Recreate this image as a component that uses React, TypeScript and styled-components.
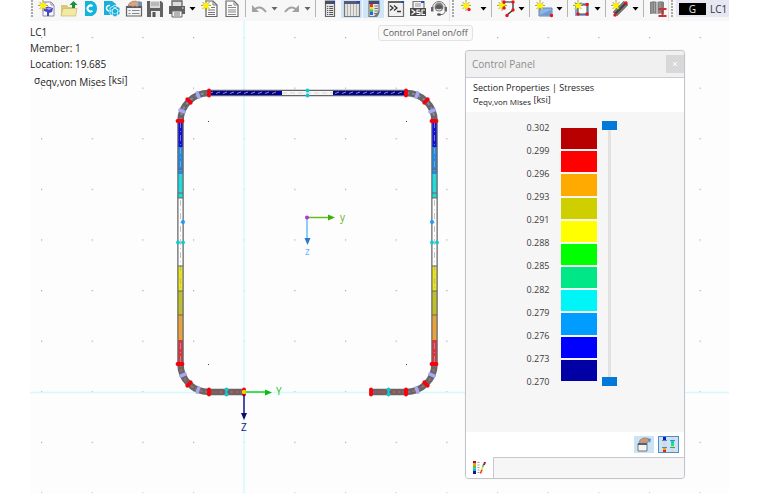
import React from "react";
import styled, { createGlobalStyle, css } from "styled-components";

const GlobalStyle = createGlobalStyle`
  *, *::before, *::after { box-sizing: border-box; }
  body {
    margin: 0;
    background: #fff;
    font-family: "Open Sans", "Noto Sans", sans-serif;
    font-size: 10px;
    color: #1c1c1c;
    overflow: hidden;
  }
  button, input { font: inherit; margin: 0; padding: 0; }
`;

const Shell = styled.div`
  display: flex;
  flex-direction: column;
  height: 100vh;
  margin: 0 31px 0 30px;
`;

/* ---------- toolbar ---------- */

const Toolbar = styled.div`
  display: flex;
  flex: none;
  height: 21px;
  background: #f7f7f7;
  overflow: hidden;
`;

const Handle = styled.span<{ $w: number }>`
  flex: none;
  width: ${(p) => p.$w}px;
  height: 18px;
  background: radial-gradient(circle at 1px 1px, #a9a9a9 1px, transparent 1px) 1px 0 / 3px 3px repeat-y;
`;

const ToolButton = styled.button<{ $w?: number; $on?: boolean }>`
  flex: none;
  display: flex;
  justify-content: center;
  width: ${(p) => p.$w ?? 22}px;
  height: 18px;
  border: 0;
  background: none;
  ${(p) => p.$on && css`
    background: #cfe6f9;
    border: solid #f7f7f7;
    border-width: 0 1px 0 0;
  `}
  svg { flex: none; display: block; width: 18px; height: 18px; }
`;

const CaretButton = styled.button<{ $soft?: boolean }>`
  flex: none;
  display: flex;
  justify-content: center;
  width: 9px;
  height: 18px;
  border: 0;
  background: none;
  color: ${(p) => (p.$soft ? "#666" : "#000")};
  svg { flex: none; display: block; width: 9px; height: 18px; }
`;

const Separator = styled.span<{ $w?: number }>`
  flex: none;
  width: ${(p) => p.$w ?? 7}px;
  height: 17px;
  background: linear-gradient(#b4b4b4, #b4b4b4) center / 1px 100% no-repeat;
`;

const Gap = styled.span<{ $w: number }>`
  flex: none;
  width: ${(p) => p.$w}px;
`;

const BarEnd = styled.span`
  flex: none;
  width: 2px;
  border-left: 1px solid #e2e2e2;
`;

const LoadCase = styled.button`
  flex: 1;
  display: flex;
  align-items: center;
  gap: 4px;
  min-width: 0;
  height: 17px;
  padding: 0 0 0 3px;
  border: 0;
  background: #e7e7f3;
  color: #333;
  line-height: 16px;
`;

const LoadTag = styled.span`
  flex: none;
  width: 27px;
  height: 12px;
  background: #000;
  color: #e8e8e8;
  line-height: 12px;
  text-align: center;
`;

type IconName =
  | "model" | "open" | "cloud" | "cubes" | "calendar" | "save" | "print" | "report" | "page"
  | "undo" | "redo" | "navigator" | "tables" | "palette" | "console" | "script" | "support"
  | "node" | "line" | "surface" | "opening" | "member" | "library";

const Star = () => (
  <g>
    <path d="M5 0v11M0 5.500h10M1.500 2l7 7M8.500 2l-7 7" stroke="#8f8a3c" strokeWidth=".8" />
    <path d="M5 1l1.200 3 3.300.3-2.500 2 .9 3.200L5 7.800 2.100 9.500 3 6.300.5 4.300 3.800 4z" fill="#fff200" />
  </g>
);

const Dot = ({ x, y }: { x: number; y: number }) => <circle cx={x} cy={y} r="1.700" fill="#e8141c" />;

const drawings: Record<IconName, React.ReactNode> = {
  model: (
    <>
      <path d="M5 2h8l3 3v11H5z" fill="#fafafc" stroke="#8a8d9c" />
      <path d="M13 2v3h3" fill="none" stroke="#8a8d9c" />
      <path d="M6 8l4-1.500L15 8l-1 4-3 1v3H9v-4l-3-1z" fill="#4a45c4" />
      <path d="M8 8.500l3-1 3 1-3 1.500z" fill="#a7a2ee" />
      <Star />
    </>
  ),
  open: (
    <>
      <path d="M1 16V5h6l1.500 2H15v9z" fill="#d8cb76" />
      <path d="M1 16L3 8.500h14L15.500 16z" fill="#f3e9a5" stroke="#c6b962" strokeWidth=".7" />
      <path d="M12 8V5H9.500L13.500 1l4 4H15v3z" fill="#17903c" />
    </>
  ),
  cloud: (
    <>
      <path d="M3 1h7q5 2 5 7.500T10 16H3z" fill="#12b4dc" />
      <path d="M10.500 6.200A3 3 0 1 0 10.500 10.800" fill="none" stroke="#fff" strokeWidth="2" />
    </>
  ),
  cubes: (
    <>
      <path d="M1 1h8l4 3v3l-4 3v5H1z" fill="#19afd9" />
      <path d="M7 5.500A2.800 2.800 0 1 0 6 11" fill="none" stroke="#fff" strokeWidth="1.500" />
      <path d="M12 5l5 3v6l-5 3-5-3V8z" fill="#16afdb" stroke="#eefaff" strokeWidth=".8" />
      <path d="M9.500 6.500l5 3v6M14.500 6.500l-5 3v6M7 11l5 3 5-3M7 11l5-3 5 3" fill="none" stroke="#fff" strokeWidth=".6" />
    </>
  ),
  calendar: (
    <>
      <path d="M1.500 6.500h15V16h-15z" fill="#f2f2f2" stroke="#616161" strokeWidth="1.200" />
      <path d="M1.500 6.500h15V8h-15z" fill="#555b6e" />
      <path d="M3.500 10.500h2m1.500 0h7.500M3.500 13.500h2m1.500 0h7.500" stroke="#8a8a8a" />
      <path d="M3 6l1-2.500 3-2L11 1l3 2-.5 3-2 .8L10 5.500 8 7 6 5.500z" fill="#d6a583" stroke="#9a7259" strokeWidth=".6" />
      <path d="M13 1l4 1v4l-3 0z" fill="#6d8fbd" />
    </>
  ),
  save: (
    <>
      <path d="M1 1h14l2 2v14H1z" fill="#626262" />
      <path d="M4 1h10v7H4z" fill="#dadada" />
      <path d="M5 3h8M5 5h8" stroke="#999" />
      <path d="M5 11h9v6H5z" fill="#eee" />
      <path d="M6.500 12h3v5h-3z" fill="#555" />
    </>
  ),
  print: (
    <>
      <path d="M4 1h10v6H4z" fill="#ddd" stroke="#666" strokeWidth="1.300" />
      <path d="M1 6h16v8H1z" fill="#606060" />
      <path d="M4 11h10v6H4z" fill="#f4f4f4" stroke="#666" />
      <path d="M6 13h6M6 15h6" stroke="#777" />
      <path d="M14 8h1.500" stroke="#fff" />
    </>
  ),
  report: (
    <>
      <path d="M5 1h7l4 4v11.500H5z" fill="#fafafa" stroke="#666" strokeWidth="1.200" />
      <path d="M12 1v4h4M10 7.500h4M7 10h7M7 12.500h7M7 14.500h7" fill="none" stroke="#777" />
      <Star />
    </>
  ),
  page: (
    <>
      <path d="M3 1h8l4 4v11.500H3z" fill="#fafafa" stroke="#6a6a6a" strokeWidth="1.200" />
      <path d="M11 1v4h4M5 5.500h4M5 7.500h8M5 10h8M5 12h8M5 14.500h8" fill="none" stroke="#888" />
    </>
  ),
  undo: (
    <>
      <path d="M4 10Q10 4 16 12" fill="none" stroke="#a2a2a2" strokeWidth="2" />
      <path d="M2 5v7h7z" fill="#a2a2a2" />
    </>
  ),
  redo: (
    <>
      <path d="M14 10Q8 4 2 12" fill="none" stroke="#a2a2a2" strokeWidth="2" />
      <path d="M16 5v7H9z" fill="#a2a2a2" />
    </>
  ),
  navigator: (
    <>
      <path d="M4.500 1h9v15.500h-9z" fill="#e6e6e6" stroke="#666" strokeWidth="1.200" />
      <path d="M4 1h10v3H4z" fill="#4e4e62" />
      <path d="M11.500 1H14v2h-2.500z" fill="#2547c8" />
      <path d="M6 6.500h1.200m1 0H12M6 8.500h1.200m1 0H12M6 10.500h1.200m1 0H12M6 12.500h1.200m1 0H12M6 14.500h1.200m1 0H12" stroke="#555" />
    </>
  ),
  tables: (
    <>
      <path d="M1.500 1.500h15v15h-15z" fill="#e4e4e0" stroke="#777" strokeWidth="1.200" />
      <path d="M1 1h16v3H1z" fill="#555b74" />
      <path d="M14 1h3v2h-3z" fill="#244bc6" />
      <path d="M4.500 4v12M7.500 4v12M10.500 4v12M13.500 4v12" stroke="#b0b0b0" />
    </>
  ),
  palette: (
    <>
      <path d="M4 1h10v11l-3 4.500H4z" fill="#e4e4e2" stroke="#777" strokeWidth="1.200" />
      <path d="M4 1h10v3H4z" fill="#444a66" />
      <path d="M12 1h2v2h-2z" fill="#244bc6" />
      <path d="M5 4h3v3H5z" fill="#ee3524" /><path d="M5 7h3v2.500H5z" fill="#f3e51c" />
      <path d="M5 9.500h3V12H5z" fill="#2dd158" /><path d="M5 12h3v3H5z" fill="#2865e4" />
      <path d="M9.500 6H13M9.500 8.500H13M9.500 11H13M9 13.500h4" stroke="#777" />
      <path d="M9 16l5-5v3l-2 3z" fill="#777" />
    </>
  ),
  console: (
    <>
      <path d="M1.500 1.500h15v15h-15z" fill="#f0f0f0" stroke="#707070" strokeWidth="1.200" />
      <path d="M1 1h16v2H1z" fill="#626262" /><path d="M14 1h3v2h-3z" fill="#274ac2" />
      <path d="M3 5.500L6 8l-3 2.500M7 5.500L10 8l-3 2.500M10 11.500h4" fill="none" stroke="#333" strokeWidth="1.300" />
    </>
  ),
  script: (
    <>
      <path d="M4 8V1.500h11V8" fill="#f2f2f2" stroke="#777" strokeWidth="1.200" />
      <path d="M12 1h3v2h-3z" fill="#274ac2" />
      <path d="M6 4h6M6 6h6" stroke="#999" />
      <path d="M1 8h16v8H1z" fill="#4a4a4a" />
      <path d="M2.500 9.500L6 12l-3.500 2.500M11 10H8v2.300h3V14.500H7.500M16 10h-3v4.500h3" fill="none" stroke="#fff" strokeWidth="1.200" />
    </>
  ),
  support: (
    <>
      <circle cx="9" cy="7" r="4.500" fill="#888" />
      <path d="M5.500 6.500q3.500-4 7 0v2.500H5.500z" fill="#5b5b5b" />
      <path d="M2.500 10V8A6.500 6.500 0 0 1 15.500 8v2" fill="none" stroke="#777" />
      <path d="M1 7h2.500v4.500H1zM14.500 7H17v4.500h-2.500z" fill="#666" />
      <path d="M6.500 9q2.500 2 5 0" fill="none" stroke="#eee" />
      <path d="M15.500 11.500q-1 3.500-6 3.500" fill="none" stroke="#777" />
      <ellipse cx="9" cy="14.500" rx="2" ry="1.300" fill="#555" />
    </>
  ),
  node: <><g transform="translate(4 0)"><Star /></g><Dot x={12} y={9.5} /></>,
  line: (
    <>
      <path d="M7 8V2h9v8l-6 5" fill="none" stroke="#222" strokeWidth="1.200" />
      <Star />
      <Dot x={7} y={8} /><Dot x={7} y={2} /><Dot x={16} y={2} /><Dot x={16} y={10} /><Dot x={10} y={15.500} />
    </>
  ),
  surface: (
    <>
      <path d="M4 8h13v8H4z" fill="#8fb5e2" stroke="#6389b3" />
      <path d="M5 15l11-5v5z" fill="#6d9cd3" />
      <Star /><Dot x={16.500} y={15.500} />
    </>
  ),
  opening: (
    <>
      <path d="M2 3h14v13H2z" fill="#7fa9d8" />
      <path d="M5 5h9v9H5z" fill="#fff" stroke="#444" />
      <Star />
      <Dot x={14} y={4.500} /><Dot x={5} y={14} /><Dot x={14} y={14} />
    </>
  ),
  member: (
    <>
      <path d="M4 14L15 3" stroke="#444" strokeWidth="6" />
      <path d="M3 12.500L13.500 2M5 15.500L15.500 5" stroke="#aaa" />
      <Star />
      <Dot x={15} y={3} /><Dot x={4} y={15} />
    </>
  ),
  library: (
    <>
      <path d="M1 2q4-1.500 7 0v12q-3-1-7 0zM8 2q4-1.500 7 0v12q-3-1-7 0z" fill="#808080" />
      <path d="M8 2v12" stroke="#eee" /><path d="M3 3v10M5.500 2.500v10M11 2.500v6" stroke="#a5a5a5" />
      <path d="M9.500 9h8M9.500 16h8M13.500 9v7" stroke="#c8323b" strokeWidth="2" />
    </>
  ),
};

const Tool = ({ name, label, w, on }: { name: IconName; label: string; w?: number; on?: boolean }) => (
  <ToolButton type="button" aria-label={label} aria-pressed={on} $w={w} $on={on}>
    <svg viewBox="0 0 18 18" fill="none" aria-hidden="true">{drawings[name]}</svg>
  </ToolButton>
);

const Caret = ({ label, soft }: { label: string; soft?: boolean }) => (
  <CaretButton type="button" aria-label={label} $soft={soft}>
    <svg viewBox="0 0 9 18" aria-hidden="true"><path d="M1.500 7h6l-3 3.500z" fill="currentColor" /></svg>
  </CaretButton>
);

/* ---------- work area ---------- */

const Workspace = styled.main`
  position: relative;
  flex: 1;
  min-height: 0;
  background: #fdfdfd;
`;

const Drawing = styled.svg`
  position: absolute;
  inset: 0;
  width: 100%;
  height: 100%;
`;

const Caption = styled.div`
  position: relative;
  display: grid;
  grid-auto-rows: 16px;
  width: 140px;
  padding-top: 3px;
  line-height: 16px;
`;

const Stress = styled.span<{ $indent?: number; $sub: number }>`
  padding-left: ${(p) => p.$indent ?? 0}px;
  white-space: nowrap;
  sub {
    font-size: ${(p) => p.$sub}px;
    line-height: 0;
    vertical-align: -2px;
  }
`;

const Tooltip = styled.div`
  position: absolute;
  top: 4px;
  left: 348px;
  height: 16px;
  padding: 0 4px;
  border: 1px solid #e3e3e3;
  border-radius: 3px;
  background: #f9f9f9;
  color: #5c5c5c;
  font-size: 9px;
  line-height: 14px;
  white-space: nowrap;
`;

const Axis = styled.text`
  font-size: 10px;
`;

const blocks: [string, string][] = [
  ["M209 93H282", "#00009c"],
  ["M333 93H406", "#00009c"],
  ...[180.5, 434.5].flatMap((x): [string, string][] => [
    [`M${x} 122V147`, "#0f0fe0"],
    [`M${x} 147V174`, "#1f8ae6"],
    [`M${x} 174V198`, "#10dfe2"],
    [`M${x} 198V266`, "#ffffff"],
    [`M${x} 266V291`, "#e9e51c"],
    [`M${x} 291V315`, "#c3c11b"],
    [`M${x} 315V340`, "#f0a22c"],
    [`M${x} 340V364`, "#de3440"],
  ]),
];

const redTicks = [
  [209, 93, 0], [406, 93, 0], [209, 392, 0], [406, 392, 0], [371, 392, 0], [244, 392, 0],
  [180, 121, 90], [434, 121, 90], [180, 364, 90], [434, 364, 90],
  [189, 101, -45], [426, 101, 45], [189, 384, 45], [426, 384, -45],
];

const lilacTicks = [
  [198, 95, -22], [182, 111, -67], [417, 95, 22], [432, 111, 67],
  [198, 390, 22], [183, 375, 67], [417, 390, -22], [432, 375, -67],
];

const cyanDots = [
  [307.5, 90.5], [307.5, 95.5], [178, 242.5], [183, 242.5], [432, 242.5], [437, 242.5],
  [226.5, 389.5], [226.5, 394.5], [388.5, 389.5], [388.5, 394.5],
];

const outline = "M244 392H209A28.500 28 0 0 1 180.500 364V121A28.500 28 0 0 1 209 93H406A28.500 28 0 0 1 434.500 121V364A28.500 28 0 0 1 406 392H371";

const SectionDrawing = () => (
  <Drawing viewBox="30 21 699 472" preserveAspectRatio="xMinYMin slice" fill="none" role="img" aria-label="Stress distribution of the section">
    <defs>
      <pattern id="grid" x="41" y="37" width="50.660" height="50.600" patternUnits="userSpaceOnUse">
        <rect width="1.200" height="1.200" fill="#a8a8a8" />
      </pattern>
    </defs>
    <rect x="30" y="21" width="2000" height="2000" fill="url(#grid)" />
    <path d="M244 21V2000M30 392.500H2000" stroke="#d3fafd" strokeWidth="1.500" />
    {[[208, 121], [406, 121], [208, 364], [406, 364]].map(([x, y]) => (
      <rect key={`${x}-${y}`} x={x} y={y} width="1" height="1" fill="#444" />
    ))}

    <path d={outline} stroke="#666" strokeWidth="6.500" />
    <path d="M282 93H333" stroke="#f6f6f6" strokeWidth="4" />
    {blocks.map(([d, color]) => <path key={d} d={d} stroke={color} strokeWidth="4" />)}
    <path d="M209 93.500l4-1.500M216 93.500l4-1.500M223 93.500l4-1.500M230 93.500l4-1.500M237 93.500l4-1.500M244 93.500l4-1.500M251 93.500l4-1.500M258 93.500l4-1.500M265 93.500l4-1.500M272 93.500l4-1.500M335 93.500l4-1.500M342 93.500l4-1.500M349 93.500l4-1.500M356 93.500l4-1.500M363 93.500l4-1.500M370 93.500l4-1.500M377 93.500l4-1.500M384 93.500l4-1.500M391 93.500l4-1.500M398 93.500l4-1.500" stroke="#8d90b8" />
    <path d="M282 93H333" stroke="#d6d6d6" strokeDasharray="5 3" />
    <path d="M180.500 122V364M434.500 122V364" stroke="#aaa" strokeOpacity=".7" strokeDasharray="6 3 1 3" />
    <path d="M180.500 121A28.500 28 0 0 1 209 93M406 93A28.500 28 0 0 1 434.500 121" stroke="#8588b0" strokeWidth="2" strokeDasharray="3 3" />
    <path d="M180.500 364A28.500 28 0 0 0 209 392H244M434.500 364A28.500 28 0 0 1 406 392H371" stroke="#a06a70" strokeWidth="2" strokeDasharray="3 2" />
    <path d="M209 392H244M371 392H406" stroke="#cf2d38" strokeDasharray="4 2" />
    {[169, 193, 198, 266, 291, 315].map((y) => (
      <path key={y} d={`M178 ${y}h5M432 ${y}h5`} stroke="#666" />
    ))}

    {lilacTicks.map(([x, y, a]) => (
      <path key={`${x}-${y}`} d="M0-2.300V2.300" transform={`translate(${x} ${y}) rotate(${a})`} stroke="#a8a8f2" strokeWidth="3.500" strokeLinecap="round" />
    ))}
    {redTicks.map(([x, y, a]) => (
      <path key={`${x}-${y}`} d="M0-2.500V2.500" transform={`translate(${x} ${y}) rotate(${a})`} stroke="#f8000c" strokeWidth="3.800" strokeLinecap="round" />
    ))}
    {cyanDots.map(([x, y]) => (
      <circle key={`${x}-${y}`} cx={x} cy={y} r="1.900" fill="#0acbd0" />
    ))}
    <path d="M226.500 389v6M388.500 389v6" stroke="#0acbd0" strokeWidth="1.500" />
    <circle cx="183" cy="222" r="2" fill="#169bff" />
    <circle cx="432" cy="222" r="2" fill="#169bff" />

    <path d="M307 217V239" stroke="#63bdf6" strokeWidth="1.500" />
    <path d="M304.500 238h6l-3 7z" fill="#2b78c6" />
    <path d="M308 217.500H329" stroke="#63bd1c" strokeWidth="1.500" />
    <path d="M328 214.500v6l7-3z" fill="#3bb20b" />
    <circle cx="307" cy="217.500" r="2" fill="#ad35d9" />
    <Axis x="340" y="221" fill="#5eb31a">y</Axis>
    <Axis x="305" y="255" fill="#62b5fa">z</Axis>

    <path d="M246 392H265" stroke="#16d316" strokeWidth="1.500" />
    <path d="M265 389.500v6l7-3z" fill="#08bd12" />
    <path d="M244 394V414" stroke="#171785" strokeWidth="1.500" />
    <path d="M241 413h6l-3 7z" fill="#0b0b73" />
    <circle cx="244" cy="392" r="2.200" fill="#e8d400" />
    <Axis x="276" y="395" fill="#12c312">Y</Axis>
    <Axis x="241" y="431" fill="#20208c">Z</Axis>
  </Drawing>
);

/* ---------- control panel ---------- */

const Panel = styled.section`
  position: absolute;
  top: 29px;
  right: 44px;
  width: 220px;
  border: 1px solid #c3c3cb;
  border-radius: 4px;
  background: #f6f6f6;
  overflow: hidden;
  box-shadow: 0 0 1px #d0d0d8;
`;

const PanelHeader = styled.header`
  display: flex;
  align-items: center;
  justify-content: space-between;
  height: 27px;
  padding-left: 6px;
  border-bottom: 1px solid #ccccd6;
  background: #f0f0f0;
`;

const PanelTitle = styled.h2`
  margin: 0;
  color: #8d8d8d;
  font-size: 10px;
  font-weight: 400;
`;

const CloseButton = styled.button`
  display: grid;
  place-items: center;
  width: 18px;
  height: 18px;
  border: 0;
  background: #d8d8d8;
`;

const PanelInfo = styled.div`
  display: grid;
  grid-auto-rows: 12px;
  height: 34px;
  padding: 4px 7px;
  background: #fff;
  font-size: 9px;
  line-height: 12px;
`;

const Scale = styled.div`
  display: grid;
  grid-template-columns: 22px 36px 15px;
  column-gap: 5px;
  justify-content: center;
  height: 320px;
  padding: 9px 0 45px;
`;

const Values = styled.ol`
  display: flex;
  flex-direction: column;
  align-items: flex-end;
  justify-content: space-between;
  height: 268px;
  margin: 0;
  padding: 0 6px 0 0;
  list-style: none;
  color: #3c3c3c;
  font-size: 9px;
  line-height: 14px;
`;

const Swatches = styled.div`
  display: grid;
  gap: 2px;
  height: 253px;
  margin-top: 7px;
`;

const Swatch = styled.span<{ $color: string }>`
  background: ${(p) => p.$color};
`;

const RangeTrack = styled.div`
  display: grid;
  height: 265px;
  background: linear-gradient(#e2e2e2, #e2e2e2) center / 3px 100% no-repeat;
`;

const RangeInput = styled.input`
  grid-area: 1 / 1;
  appearance: none;
  writing-mode: vertical-lr;
  direction: rtl;
  width: 15px;
  height: 265px;
  background: none;
  pointer-events: none;
  &::-webkit-slider-runnable-track { width: 15px; background: none; }
  &::-webkit-slider-thumb {
    appearance: none;
    width: 15px;
    height: 9px;
    background: #0079d8;
    pointer-events: auto;
  }
`;

const PanelActions = styled.div`
  display: flex;
  justify-content: flex-end;
  gap: 4px;
  height: 25px;
  padding: 4px 5px;
  background: #fff;
`;

const ActionButton = styled.button<{ $active?: boolean }>`
  display: grid;
  place-items: center;
  width: ${(p) => (p.$active ? 21 : 20)}px;
  height: 17px;
  border: 1px solid ${(p) => (p.$active ? "#528fbe" : "#cbe3f7")};
  background: #cbe3f7;
`;

const Tabs = styled.div`
  display: flex;
  height: 21px;
  background: #fff;
`;

const Tab = styled.button`
  display: grid;
  place-items: center;
  width: 27px;
  border: 0;
  background: #fff;
`;

const TabFill = styled.div`
  flex: 1;
  border-top: 1px solid #c8c8d0;
  border-left: 1px solid #c8c8d0;
  background: #f6f6f6;
`;

const values = ["0.302", "0.299", "0.296", "0.293", "0.291", "0.288", "0.285", "0.282", "0.279", "0.276", "0.273", "0.270"];
const colors = ["#b90000", "#ff0000", "#ffaa00", "#cfcf00", "#ffff00", "#00ff00", "#00e787", "#00f5f7", "#009cff", "#0000ff", "#0000a5"];

const ControlPanel = () => (
  <Panel aria-label="Control Panel">
    <PanelHeader>
      <PanelTitle>Control Panel</PanelTitle>
      <CloseButton type="button" aria-label="Close">
        <svg width="6" height="6" viewBox="0 0 6 6" aria-hidden="true"><path d="M1 1l4 4M5 1L1 5" stroke="#fff" /></svg>
      </CloseButton>
    </PanelHeader>
    <PanelInfo>
      <span>Section Properties | Stresses</span>
      <Stress $sub={8}>σ<sub>eqv,von Mises</sub> [ksi]</Stress>
    </PanelInfo>
    <Scale>
      <Values>{values.map((v) => <li key={v}>{v}</li>)}</Values>
      <Swatches>{colors.map((c) => <Swatch key={c} $color={c} />)}</Swatches>
      <RangeTrack>
        <RangeInput type="range" aria-label="Upper limit" min="0.27" max="0.302" step="0.001" defaultValue="0.302" />
        <RangeInput type="range" aria-label="Lower limit" min="0.27" max="0.302" step="0.001" defaultValue="0.27" />
      </RangeTrack>
    </Scale>
    <PanelActions>
      <ActionButton type="button" aria-label="Edit color scale">
        <svg width="16" height="15" viewBox="0 0 16 15" aria-hidden="true">
          <path d="M2 6.500h9V14H2z" fill="#f4f4f4" stroke="#777" />
          <path d="M2 6h9v2H2z" fill="#555d75" />
          <path d="M3 5.500l1-2.500 3-2h4l2 2-1 2.500-2 .5-2-1-2 1.500z" fill="#c79b7c" stroke="#87644e" strokeWidth=".5" />
          <path d="M11 1l4 1-1 4z" fill="#628bb8" />
        </svg>
      </ActionButton>
      <ActionButton type="button" aria-label="Color limits" aria-pressed="true" $active>
        <svg width="17" height="15" viewBox="0 0 17 15" aria-hidden="true">
          <path d="M3 0h3v15H3zM11 0h3v15h-3z" fill="#d8d8d8" />
          <path d="M3 0h3v3H3z" fill="#1717d3" /><path d="M3 11h3v2H3z" fill="#f1a21a" /><path d="M3 13h3v2H3z" fill="#e02416" />
          <path d="M11 4h3v2h-3z" fill="#18bff1" /><path d="M11 6h3v3h-3z" fill="#20e56b" /><path d="M11 9h3v2h-3z" fill="#d7e928" />
          <path d="M2 3.500h5M2 10.500h5M10 3.500h5M10 10.500h5" stroke="#4b8bb7" />
        </svg>
      </ActionButton>
    </PanelActions>
    <Tabs role="tablist">
      <Tab type="button" role="tab" aria-selected="true" aria-label="Color scale">
        <svg width="13" height="13" viewBox="0 0 13 13" aria-hidden="true">
          <path d="M0 0h3v2.500H0z" fill="#b31118" /><path d="M0 2.500h3V5H0z" fill="#f29b17" />
          <path d="M0 5h3v2.500H0z" fill="#38d817" /><path d="M0 7.500h3V10H0z" fill="#15afe6" /><path d="M0 10h3v3H0z" fill="#0c168e" />
          <path d="M4.500 1.500h2M4.500 4h2M4.500 6.500h2M4.500 9h2M4.500 11.500h2" stroke="#999" />
          <path d="M7.500 12.500l1.500-4" stroke="#ec391e" strokeWidth="1.500" /><path d="M8.700 9l1-3" stroke="#efdb1a" strokeWidth="1.500" />
          <path d="M9.700 6l1-3" stroke="#22c96c" strokeWidth="1.500" /><path d="M10.900 4l1.200-3" stroke="#ad2040" strokeWidth="2" />
        </svg>
      </Tab>
      <TabFill />
    </Tabs>
  </Panel>
);

export default function App() {
  return (
    <>
      <GlobalStyle />
      <Shell>
        <Toolbar role="toolbar" aria-label="Main toolbar">
          <Handle $w={6} />
          <Tool name="model" label="New model" />
          <Tool name="open" label="Open" />
          <Tool name="cloud" label="Cloud" w={21} />
          <Tool name="cubes" label="Block manager" />
          <Tool name="calendar" label="Model data" w={21} />
          <Tool name="save" label="Save" />
          <Tool name="print" label="Print" />
          <Caret label="Print options" />
          <Gap $w={2} />
          <Tool name="report" label="New report" />
          <Tool name="page" label="Report" />
          <Separator $w={5} />
          <Tool name="undo" label="Undo" />
          <Caret label="Undo list" soft />
          <Gap $w={2} />
          <Tool name="redo" label="Redo" />
          <Caret label="Redo list" soft />
          <Separator />
          <Tool name="navigator" label="Navigator" />
          <Tool name="tables" label="Tables" on />
          <Tool name="palette" label="Control Panel" on />
          <Tool name="console" label="Console" />
          <Tool name="script" label="Script" w={21} />
          <Tool name="support" label="Support" w={21} />
          <BarEnd />
          <Handle $w={4} />
          <Tool name="node" label="New node" />
          <Gap $w={2} />
          <Caret label="Node types" />
          <Separator />
          <Tool name="line" label="New line" />
          <Caret label="Line types" />
          <Separator />
          <Tool name="surface" label="New surface" />
          <Caret label="Surface types" />
          <Separator />
          <Tool name="opening" label="New opening" />
          <Caret label="Opening types" />
          <Separator />
          <Tool name="member" label="New member" />
          <Caret label="Member types" />
          <Separator />
          <Tool name="library" label="Section library" w={21} />
          <BarEnd />
          <Handle $w={4} />
          <Gap $w={2} />
          <LoadCase type="button"><LoadTag>G</LoadTag>LC1</LoadCase>
        </Toolbar>
        <Workspace>
          <SectionDrawing />
          <Caption>
            <span>LC1</span>
            <span>Member: 1</span>
            <span>Location: 19.685</span>
            <Stress $indent={4} $sub={10}>σ<sub>eqv,von Mises</sub> [ksi]</Stress>
          </Caption>
          <Tooltip role="tooltip">Control Panel on/off</Tooltip>
          <ControlPanel />
        </Workspace>
      </Shell>
    </>
  );
}
